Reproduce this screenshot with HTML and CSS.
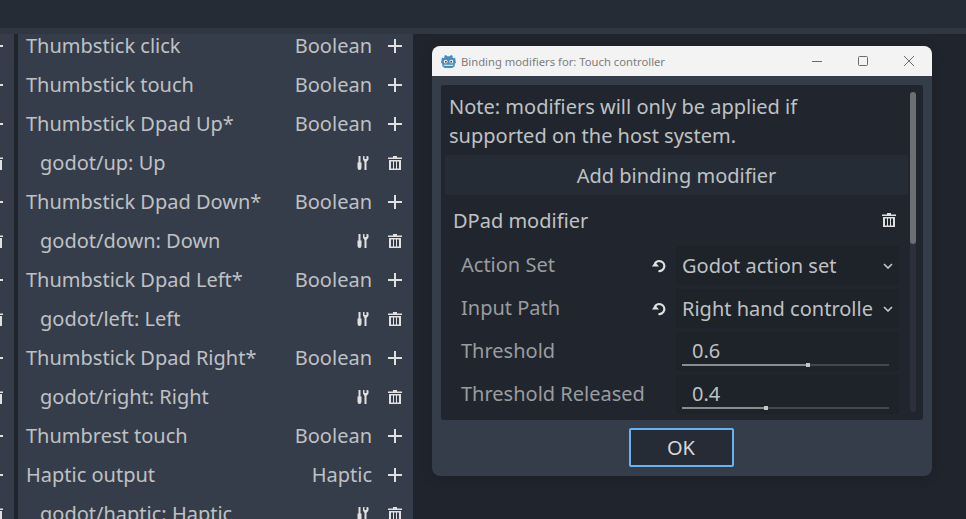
FILE: index.html
```html
<!DOCTYPE html>
<html lang="en">
<head>
    <meta charset="UTF-8">
    <meta name="viewport" content="width=device-width, initial-scale=1.0">
    <title>Binding modifiers</title>
    <link rel="stylesheet" href="styles.css">
</head>
<body>
    <svg class="defs" width="0" height="0">
        <symbol id="plus" viewBox="0 0 14 14">
            <path d="M0 7H14M7 0V14" stroke="currentColor" stroke-width="2" fill="none"/>
        </symbol>
        <symbol id="trash" viewBox="0 0 14 14">
            <path fill="currentColor" fill-rule="evenodd" d="M5 0H9V1.5H14V3H0V1.5H5ZM1 4H13V14H1ZM3 5.5V12.5H5V5.5ZM6 5.5V12.5H8V5.5ZM9 5.5V12.5H11V5.5Z"/>
        </symbol>
        <symbol id="tools" viewBox="0 0 12 14">
            <path fill="currentColor" d="M1.5 0H3.5V6.5H4.5V11.5A2 2.5 0 0 1 0.5 11.5V6.5H1.5ZM6.5 0H7.5V3H9.5V0H10L11.5 0.5V3.5L9.5 6V14H7.5V6L6 3.5V0.5Z"/>
        </symbol>
        <symbol id="reset" viewBox="0 0 14 14">
            <path d="M3 4.5A5 5 0 1 1 6.5 12" stroke="currentColor" stroke-width="2.2" fill="none"/>
            <path fill="currentColor" d="M0 7.5H7L3 3Z"/>
        </symbol>
    </svg>

    <div class="topbar"></div>
    <div class="strip"></div>

    <div class="main">
        <div class="stub">
            <div class="rows">
                <div class="row"><svg class="ico"><use href="#plus"/></svg></div>
                <div class="row"><svg class="ico"><use href="#plus"/></svg></div>
                <div class="row"><svg class="ico"><use href="#plus"/></svg></div>
                <div class="row"><svg class="ico"><use href="#trash"/></svg></div>
                <div class="row"><svg class="ico"><use href="#plus"/></svg></div>
                <div class="row"><svg class="ico"><use href="#trash"/></svg></div>
                <div class="row"><svg class="ico"><use href="#plus"/></svg></div>
                <div class="row"><svg class="ico"><use href="#trash"/></svg></div>
                <div class="row"><svg class="ico"><use href="#plus"/></svg></div>
                <div class="row"><svg class="ico"><use href="#trash"/></svg></div>
                <div class="row"><svg class="ico"><use href="#plus"/></svg></div>
                <div class="row"><svg class="ico"><use href="#plus"/></svg></div>
                <div class="row"><svg class="ico"><use href="#trash"/></svg></div>
            </div>
        </div>

        <div class="list">
            <div class="rows">
                <div class="row"><span class="name">Thumbstick click</span><span class="type">Boolean</span><svg class="ico"><use href="#plus"/></svg></div>
                <div class="row"><span class="name">Thumbstick touch</span><span class="type">Boolean</span><svg class="ico"><use href="#plus"/></svg></div>
                <div class="row"><span class="name">Thumbstick Dpad Up*</span><span class="type">Boolean</span><svg class="ico"><use href="#plus"/></svg></div>
                <div class="row sub"><span class="name">godot/up: Up</span><svg class="tool"><use href="#tools"/></svg><svg class="ico"><use href="#trash"/></svg></div>
                <div class="row"><span class="name">Thumbstick Dpad Down*</span><span class="type">Boolean</span><svg class="ico"><use href="#plus"/></svg></div>
                <div class="row sub"><span class="name">godot/down: Down</span><svg class="tool"><use href="#tools"/></svg><svg class="ico"><use href="#trash"/></svg></div>
                <div class="row"><span class="name">Thumbstick Dpad Left*</span><span class="type">Boolean</span><svg class="ico"><use href="#plus"/></svg></div>
                <div class="row sub"><span class="name">godot/left: Left</span><svg class="tool"><use href="#tools"/></svg><svg class="ico"><use href="#trash"/></svg></div>
                <div class="row"><span class="name">Thumbstick Dpad Right*</span><span class="type">Boolean</span><svg class="ico"><use href="#plus"/></svg></div>
                <div class="row sub"><span class="name">godot/right: Right</span><svg class="tool"><use href="#tools"/></svg><svg class="ico"><use href="#trash"/></svg></div>
                <div class="row"><span class="name">Thumbrest touch</span><span class="type">Boolean</span><svg class="ico"><use href="#plus"/></svg></div>
                <div class="row"><span class="name">Haptic output</span><span class="type">Haptic</span><svg class="ico"><use href="#plus"/></svg></div>
                <div class="row sub"><span class="name">godot/haptic: Haptic</span><svg class="tool"><use href="#tools"/></svg><svg class="ico"><use href="#trash"/></svg></div>
            </div>
        </div>
    </div>

    <div class="dialog">
        <div class="titlebar">
            <svg class="logo" viewBox="0 0 16 16">
                <path fill="#478cbf" d="M5.5 1 6.5 2.4H9.5L10.5 1 12.5 1.8 12.2 3.4 13.4 4.4 15 3.8 16 9.5 14.6 10V13L12 14.8H4L1.4 13V10L0 9.5 1 3.8 2.6 4.4 3.8 3.4 3.5 1.8Z"/>
                <circle cx="5" cy="8" r="2" fill="#fff"/>
                <circle cx="11" cy="8" r="2" fill="#fff"/>
                <circle cx="5.2" cy="8.2" r="1" fill="#414042"/>
                <circle cx="10.8" cy="8.2" r="1" fill="#414042"/>
                <path d="M3 12H13" stroke="#fff" stroke-width="1"/>
            </svg>
            <span class="title">Binding modifiers for: Touch controller</span>
            <div class="winbtns">
                <svg class="winbtn" viewBox="0 0 10 10"><path d="M0 5.5H10" stroke="#6b6b6b" fill="none"/></svg>
                <svg class="winbtn" viewBox="0 0 10 10"><rect x="0.5" y="0.5" width="9" height="9" rx="1" stroke="#6b6b6b" fill="none"/></svg>
                <svg class="winbtn" viewBox="0 0 10 10"><path d="M0 0L10 10M10 0L0 10" stroke="#6b6b6b" fill="none"/></svg>
            </div>
        </div>
        <div class="dialog-body">
            <div class="scroll">
                <div class="content">
                    <p class="note">Note: modifiers will only be applied if supported on the host system.</p>
                    <div class="add-btn">Add binding modifier</div>
                    <div class="mod-head">
                        <span>DPad modifier</span>
                        <svg class="ico"><use href="#trash"/></svg>
                    </div>
                    <div class="props">
                        <div class="prop">
                            <span class="prop-label">Action Set</span>
                            <svg class="reset"><use href="#reset"/></svg>
                            <div class="field select"><span class="sel-text">Godot action set</span><svg class="chev" viewBox="0 0 10 6"><path d="M1 1L5 5 9 1" stroke="#c8c9cb" stroke-width="1.6" fill="none"/></svg></div>
                        </div>
                        <div class="prop">
                            <span class="prop-label">Input Path</span>
                            <svg class="reset"><use href="#reset"/></svg>
                            <div class="field select"><span class="sel-text">Right hand controller</span><svg class="chev" viewBox="0 0 10 6"><path d="M1 1L5 5 9 1" stroke="#c8c9cb" stroke-width="1.6" fill="none"/></svg></div>
                        </div>
                        <div class="prop">
                            <span class="prop-label">Threshold</span>
                            <div class="field slider">
                                <span class="num">0.6</span>
                                <div class="track"><div class="fill" style="width: 61%"><i class="grab"></i></div></div>
                            </div>
                        </div>
                        <div class="prop">
                            <span class="prop-label">Threshold Released</span>
                            <div class="field slider">
                                <span class="num">0.4</span>
                                <div class="track"><div class="fill" style="width: 40.5%"><i class="grab"></i></div></div>
                            </div>
                        </div>
                    </div>
                </div>
                <div class="scrollbar"><div class="thumb"></div></div>
            </div>
            <div class="ok-wrap"><div class="ok">OK</div></div>
        </div>
    </div>
</body>
</html>
```

FILE: styles.css
```css
* {
    box-sizing: border-box;
}
html, body {
    height: 100%;
}
body {
    margin: 0;
    display: flex;
    flex-direction: column;
    overflow: hidden;
    background-color: #20242c;
    color: #bfc1c4;
    font-family: "Noto Sans", sans-serif;
    font-size: 20px;
}
.defs {
    position: absolute;
}
.topbar {
    height: 28px;
    background-color: #262c36;
}
.strip {
    height: 6px;
    background-color: #303642;
}
.main {
    flex: 1;
    display: flex;
    min-height: 0;
}

/* action list */
.stub {
    width: 14px;
    background-color: #363d4a;
    overflow: hidden;
    margin-right: 4px;
}
.stub .rows {
    width: 14px;
}
.stub .row {
    justify-content: flex-end;
    padding: 0 11px 0 0;
}
.stub .ico {
    margin-right: 0;
}
.list {
    width: 395px;
    background-color: #363d4a;
    overflow: hidden;
}
.rows {
    margin-top: -8px;
}
.row {
    height: 39px;
    display: flex;
    align-items: center;
    padding: 0 11px 0 8px;
}
.row.sub {
    padding-left: 22px;
}
.name {
    flex: 1;
    white-space: nowrap;
}
.type {
    margin-right: 16px;
}
.ico {
    width: 14px;
    height: 14px;
    flex: none;
    color: #e0e0e0;
}
.tool {
    width: 12px;
    height: 14px;
    flex: none;
    margin-right: 19px;
    color: #e0e0e0;
}

/* dialog */
.dialog {
    position: absolute;
    left: 432px;
    top: 46px;
    width: 500px;
    height: 430px;
    display: flex;
    flex-direction: column;
    background-color: #363d4a;
    border-radius: 8px;
    box-shadow: 0 2px 12px rgba(0, 0, 0, 0.15);
    overflow: hidden;
}
.titlebar {
    height: 30px;
    flex: none;
    display: flex;
    align-items: center;
    padding-left: 9px;
    background-color: #f3f3f3;
}
.logo {
    width: 15px;
    height: 15px;
    margin-right: 5px;
}
.title {
    flex: 1;
    font-size: 11.25px;
    color: #7d7d7d;
}
.winbtns {
    display: flex;
    gap: 36px;
    padding-right: 18px;
}
.winbtn {
    width: 10px;
    height: 10px;
}
.dialog-body {
    flex: 1;
    display: flex;
    flex-direction: column;
    padding: 9px 9px 9px;
}
.scroll {
    height: 335px;
    flex: none;
    position: relative;
    overflow: hidden;
    background-color: #21262e;
    border-radius: 2px;
}
.content {
    padding: 7px 15px 0 4px;
}
.note {
    margin: 0 0 5px;
    padding: 0 45px 0 4px;
    line-height: 29px;
}
.add-btn {
    height: 40px;
    line-height: 41px;
    text-align: center;
    background-color: #262c36;
    border-radius: 2px;
}
.mod-head {
    height: 50px;
    display: flex;
    align-items: center;
    justify-content: space-between;
    padding: 0 12px 0 8px;
}
.props {
    display: flex;
    flex-direction: column;
    gap: 4px;
    margin-top: 1px;
}
.prop {
    height: 39px;
    display: flex;
    align-items: center;
    padding-left: 16px;
    margin-right: 9px;
}
.prop-label {
    flex: 1;
    padding-bottom: 2px;
    color: #9a9c9f;
}
.reset {
    width: 14px;
    height: 14px;
    margin-right: 10px;
    color: #e0e0e0;
}
.field {
    width: 223px;
    height: 39px;
    flex: none;
    background-color: #1e2229;
    border-radius: 2px;
}
.select {
    display: flex;
    align-items: center;
    padding: 0 6px;
    justify-content: space-between;
}
.sel-text {
    width: 191px;
    overflow: hidden;
    white-space: nowrap;
}
.chev {
    width: 10px;
    height: 6px;
}
.slider {
    position: relative;
    padding-left: 16px;
    line-height: 38px;
}
.track {
    position: absolute;
    left: 6px;
    right: 10px;
    bottom: 5px;
    height: 2px;
    background-color: #43474f;
}
.fill {
    position: relative;
    height: 2px;
    background-color: #8a8c90;
}
.grab {
    position: absolute;
    right: -2px;
    top: -1px;
    width: 4px;
    height: 4px;
    background-color: #c4c5c7;
}
.scrollbar {
    position: absolute;
    left: 469px;
    top: 7px;
    width: 6px;
    height: 320px;
    background-color: #2b303a;
    border-radius: 3px;
}
.thumb {
    height: 152px;
    background-color: #6c6f74;
    border-radius: 3px;
}
.ok-wrap {
    display: flex;
    justify-content: center;
    padding: 8px 2px 0 0;
}
.ok {
    width: 105px;
    height: 39px;
    line-height: 35px;
    text-align: center;
    color: #d8d9da;
    background-color: #262c36;
    border: 2px solid #6ab1f2;
    border-radius: 2px;
}
```
